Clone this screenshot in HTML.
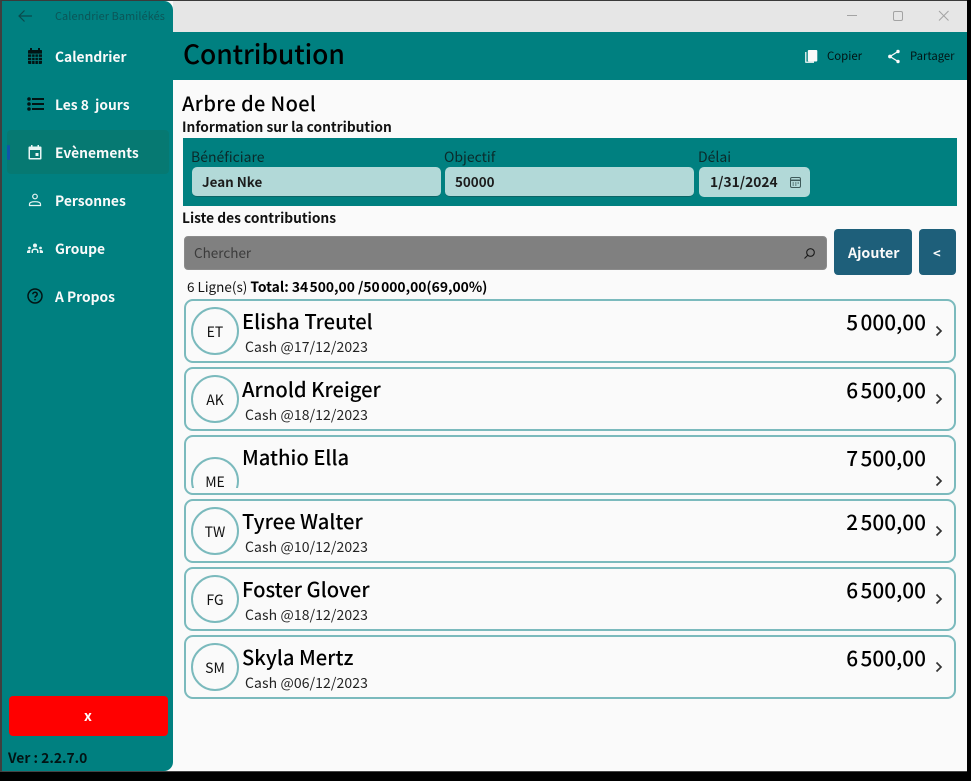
<!DOCTYPE html>
<html lang="fr"><head><meta charset="utf-8"><title>Contribution</title>
<style>
html,body{margin:0;padding:0;width:971px;height:781px;overflow:hidden;background:#000}
*{box-sizing:border-box}
body{font-family:"Noto Sans CJK JP","Liberation Sans",sans-serif;position:relative}
.a{position:absolute;white-space:nowrap;line-height:1}
.box{position:absolute}
.b{font-weight:700}
.m{font-weight:500}
.nav{color:#fafafa;font-size:13.8px;font-weight:700;left:55px}
.card{position:absolute;left:184px;width:772px;border:2px solid #7bbabd;border-radius:9px;background:#fafafa;overflow:hidden}
.av{position:absolute;left:5px;width:48px;height:48px;border:2px solid #7bbabd;border-radius:50%;text-align:center;font-size:14px;line-height:46px;color:#111}
.name{position:absolute;left:56px;font-size:20.2px;line-height:1;font-weight:500;color:#000;white-space:nowrap}
.sub{position:absolute;left:59px;font-size:14px;line-height:1;color:#222;white-space:nowrap;letter-spacing:.1px}
.amt{position:absolute;right:28px;font-size:20.8px;word-spacing:-2.2px;line-height:1;font-weight:500;color:#000;white-space:nowrap}
.chev{position:absolute;left:747px;width:12px;height:12px}
.inp{position:absolute;top:167px;height:30px;background:#b2d9d8;border-radius:5px;border-bottom:1px solid #0b6466;font-size:13.4px;font-weight:700;color:#1c1c1c;line-height:29px;padding-left:10px}
.lbl{color:#0a2a2a;font-size:14px;top:150px}
</style></head><body>
<div class="box" style="left:0;top:0;width:967px;height:772px;background:#fafafa;border-top:1px solid #3a3a3a;border-left:2px solid #3f3f3f;border-bottom:1px solid #444"></div>
<div class="box" style="left:173px;top:1px;width:794px;height:31px;background:#e6e6e6"></div>
<div class="box" style="left:173px;top:32px;width:794px;height:48px;background:#008080"></div>
<div class="box" style="left:2px;top:1px;width:171px;height:770px;background:#008080;border-radius:0 9px 9px 0"></div>

<svg class="box" style="left:17px;top:9px" width="16" height="14" viewBox="0 0 16 14" fill="none" stroke="#0b4a4c" stroke-width="1.2"><path d="M15 7H2M7.5 1.5 2 7l5.5 5.5"/></svg>
<div class="a" style="left:55px;top:11px;font-size:10.9px;color:#0b5557;letter-spacing:.1px">Calendrier Bamilékés</div>

<svg class="box" style="left:841px;top:10px" width="110" height="12" viewBox="0 0 110 12" fill="none" stroke="#a3a3a3" stroke-width="1"><path d="M6 5.5H16"/><rect x="52.500" y="1.500" width="9" height="9" rx="1.500"/><path d="M98 1l9.500 9.500M107.500 1 98 10.500"/></svg>

<div class="nav a" style="top:50px">Calendrier</div>
<div class="nav a" style="top:98px">Les 8&nbsp; jours</div>
<div class="box" style="left:7px;top:130px;width:162px;height:44px;background:#067972;border-radius:4px"></div>
<div class="box" style="left:7px;top:145px;width:3px;height:15px;background:#0f55a8;border-radius:2px"></div>
<div class="nav a" style="top:146px">Evènements</div>
<div class="nav a" style="top:194px">Personnes</div>
<div class="nav a" style="top:242px">Groupe</div>
<div class="nav a" style="top:290px">A Propos</div>

<svg class="box" style="left:27px;top:47px" width="16" height="18" viewBox="0 0 16 18"><path fill="#021414" d="M3 1h2v2h6V1h2v2h1.500A1 1 0 0 1 15 4v12a1 1 0 0 1-1 1H2a1 1 0 0 1-1-1V4a1 1 0 0 1 1-1h1z"/><path stroke="#008080" stroke-width=".8" d="M1 7h14M1 10.300h14M1 13.600h14M4.700 7v10M8 7v10M11.300 7v10"/></svg>
<svg class="box" style="left:27px;top:97px" width="17" height="14" viewBox="0 0 17 14" fill="#021414"><circle cx="2" cy="2" r="1.800"/><circle cx="2" cy="7" r="1.800"/><circle cx="2" cy="12" r="1.800"/><rect x="5" y="1" width="12" height="2"/><rect x="5" y="6" width="12" height="2"/><rect x="5" y="11" width="12" height="2"/></svg>
<svg class="box" style="left:28px;top:145px" width="14" height="15" viewBox="0 0 14 15" fill="none"><path fill="#e8f5f4" d="M3 0h1.500v1.500h5V0H11v1.500h1.500A1 1 0 0 1 13.500 2.500v11a1 1 0 0 1-1 1h-11a1 1 0 0 1-1-1v-11a1 1 0 0 1 1-1H3z"/><rect x="2" y="5" width="10" height="8" fill="#067972"/><rect x="7.500" y="8" width="3" height="3" fill="#e8f5f4"/></svg>
<svg class="box" style="left:28px;top:193px" width="14" height="14" viewBox="0 0 14 14" fill="none" stroke="#e8f5f4" stroke-width="1.200"><circle cx="7" cy="3.500" r="2.300"/><path d="M1.500 12.500v-1.500c0-1.300 2-2.300 5.500-2.300s5.500 1 5.500 2.300v1.500z"/></svg>
<svg class="box" style="left:27px;top:243px" width="16" height="11" viewBox="0 0 16 11" fill="#e8f5f4"><circle cx="8" cy="2.500" r="2"/><path d="M4.500 10V8c0-1.500 1.500-2.500 3.500-2.500s3.500 1 3.500 2.500v2H10V8c0-.7-.8-1-2-1s-2 .3-2 1v2z"/><circle cx="2.500" cy="5" r="1.400"/><circle cx="13.500" cy="5" r="1.400"/><path d="M0 10V8.500c0-.8 1-1.500 3.200-1.500v3zM16 10V8.500c0-.8-1-1.500-3.200-1.500v3z"/></svg>
<svg class="box" style="left:27px;top:288px" width="16" height="16" viewBox="0 0 16 16" fill="none" stroke="#021414" stroke-width="1.500"><circle cx="8" cy="8" r="7"/><path d="M5.800 6.300C5.800 5 6.800 4.200 8 4.200s2.200.8 2.200 2c0 1.700-2.200 1.600-2.200 3.400"/><path d="M8 11v1.300"/></svg>

<div class="box" style="left:9px;top:696px;width:159px;height:40px;background:#ff0000;border-radius:4px"></div>
<div class="a b" style="left:84px;top:709px;font-size:14px;color:#fff">x</div>
<div class="a b" style="left:8px;top:751px;font-size:13.85px;color:#021414">Ver : 2.2.7.0</div>

<div class="a m" style="left:183px;top:40px;font-size:26.5px;color:#000;letter-spacing:-.1px">Contribution</div>
<svg class="box" style="left:805px;top:49px" width="14" height="15" viewBox="0 0 14 15"><path fill="#cfe6e5" d="M0 3h1.500v9.500H9V14H1a1 1 0 0 1-1-1z"/><rect x="2.800" y="1" width="9.500" height="11.500" rx="1" fill="#fafafa"/></svg>
<div class="a" style="left:827px;top:51px;font-size:11.4px;color:#021414">Copier</div>
<svg class="box" style="left:887px;top:49px" width="14" height="15" viewBox="0 0 14 15" fill="#fafafa" stroke="#fafafa"><path fill="none" stroke-width="1.300" d="M11 2.500 3 7.500l8 5"/><circle cx="11" cy="2.500" r="1.700" stroke="none"/><circle cx="3" cy="7.500" r="1.900" stroke="none"/><circle cx="11" cy="12.500" r="1.700" stroke="none"/></svg>
<div class="a" style="left:910px;top:51px;font-size:11.3px;color:#021414">Partager</div>

<div class="a m" style="left:182px;top:93px;font-size:20px;color:#000;letter-spacing:.35px">Arbre de Noel</div>
<div class="a b" style="left:182px;top:120px;font-size:13.74px;color:#111">Information sur la contribution</div>
<div class="box" style="left:183px;top:138px;width:774px;height:68px;background:#008080"></div>
<div class="a lbl" style="left:191px">Bénéficiare</div>
<div class="a lbl" style="left:444px">Objectif</div>
<div class="a lbl" style="left:698px">Délai</div>
<div class="inp" style="left:192px;width:249px">Jean Nke</div>
<div class="inp" style="left:445px;width:249px">50000</div>
<div class="inp" style="left:699px;width:111px;border-bottom:0;padding-left:11px;line-height:29px;font-size:13.8px">1/31/2024</div>
<svg class="box" style="left:789px;top:176px" width="13" height="13" viewBox="0 0 13 13" fill="none" stroke="#3f5a5a" stroke-width="1"><rect x="1.500" y="1.500" width="10" height="10" rx="1.500"/><path d="M1.500 4.300h10" stroke-width="1.500"/><path d="M3.500 7h1.500M6 7h1.500M8.500 7H10M3.500 9h1.500M6 9h1.500"/></svg>

<div class="a b" style="left:182px;top:211px;font-size:13.75px;color:#111">Liste des contributions</div>
<div class="box" style="left:184px;top:236px;width:643px;height:34px;background:#808080;border-radius:4px;border:1px solid #8b8b8b"></div>
<div class="a" style="left:194px;top:246px;font-size:13.500px;color:#3b3b3b">Chercher</div>
<svg class="box" style="left:803px;top:247px" width="13" height="13" viewBox="0 0 13 13" fill="none" stroke="#1c1c1c" stroke-width="1.100"><circle cx="7.500" cy="5.500" r="3.800"/><path d="M4.800 8.200 1.500 11.500"/></svg>
<div class="box" style="left:834px;top:229px;width:78px;height:46px;background:#1e5f7a;border-radius:4px"></div>
<div class="a b" style="left:848px;top:246px;font-size:14.2px;color:#fafafa">Ajouter</div>
<div class="box" style="left:919px;top:229px;width:37px;height:46px;background:#1e5f7a;border-radius:4px"></div>
<div class="a b" style="left:933px;top:246px;font-size:13px;color:#fafafa">&lt;</div>

<div class="a" style="left:187px;top:280px;font-size:13.500px;color:#111">6 Ligne(s) <span class="b" style="color:#000;font-size:13.85px">Total: <span style="word-spacing:-1.8px">34 500,00</span> /<span style="word-spacing:-1.8px">50 000,00</span>(69,00%)</span></div>

<div class="card" style="top:299px;height:64px">
<div class="av" style="top:6px">ET</div><div class="name" style="top:10px">Elisha Treutel</div><div class="sub" style="top:39px">Cash @17/12/2023</div><div class="amt" style="top:10px">5 000,00</div>
<svg class="chev" style="top:24px" viewBox="0 0 12 12" fill="none" stroke="#333" stroke-width="1.700"><path d="M3.500 1.500 8 6l-4.500 4.500"/></svg></div>
<div class="card" style="top:367px;height:64px">
<div class="av" style="top:6px">AK</div><div class="name" style="top:10px">Arnold Kreiger</div><div class="sub" style="top:39px">Cash @18/12/2023</div><div class="amt" style="top:10px">6 500,00</div>
<svg class="chev" style="top:24px" viewBox="0 0 12 12" fill="none" stroke="#333" stroke-width="1.700"><path d="M3.500 1.500 8 6l-4.500 4.500"/></svg></div>
<div class="card" style="top:435px;height:60px">
<div class="av" style="top:20px;line-height:46px;height:48px;clip-path:inset(0 0 17px 0)">ME</div><div class="name" style="top:10px">Mathio Ella</div><div class="amt" style="top:10px">7 500,00</div>
<svg class="chev" style="top:38px" viewBox="0 0 12 12" fill="none" stroke="#333" stroke-width="1.700"><path d="M3.500 1.500 8 6l-4.500 4.500"/></svg></div>
<div class="card" style="top:499px;height:64px">
<div class="av" style="top:6px">TW</div><div class="name" style="top:10px">Tyree Walter</div><div class="sub" style="top:39px">Cash @10/12/2023</div><div class="amt" style="top:10px">2 500,00</div>
<svg class="chev" style="top:24px" viewBox="0 0 12 12" fill="none" stroke="#333" stroke-width="1.700"><path d="M3.500 1.500 8 6l-4.500 4.500"/></svg></div>
<div class="card" style="top:567px;height:64px">
<div class="av" style="top:6px">FG</div><div class="name" style="top:10px">Foster Glover</div><div class="sub" style="top:39px">Cash @18/12/2023</div><div class="amt" style="top:10px">6 500,00</div>
<svg class="chev" style="top:24px" viewBox="0 0 12 12" fill="none" stroke="#333" stroke-width="1.700"><path d="M3.500 1.500 8 6l-4.500 4.500"/></svg></div>
<div class="card" style="top:635px;height:64px">
<div class="av" style="top:6px">SM</div><div class="name" style="top:10px">Skyla Mertz</div><div class="sub" style="top:39px">Cash @06/12/2023</div><div class="amt" style="top:10px">6 500,00</div>
<svg class="chev" style="top:24px" viewBox="0 0 12 12" fill="none" stroke="#333" stroke-width="1.700"><path d="M3.500 1.500 8 6l-4.500 4.500"/></svg></div>
</body></html>
